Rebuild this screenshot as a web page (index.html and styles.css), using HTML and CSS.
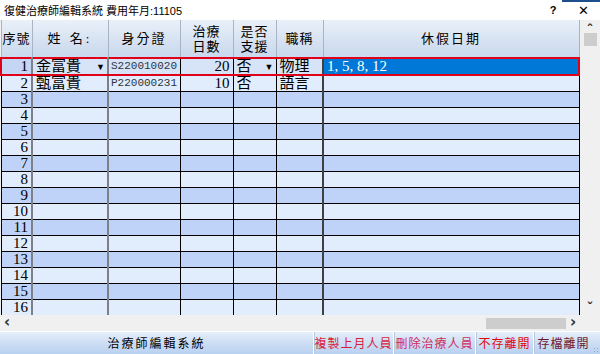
FILE: index.html
```html
<!DOCTYPE html>
<html lang="zh-Hant">
<head>
    <meta charset="UTF-8">
    <title>復健治療師編輯系統</title>
    <link rel="stylesheet" href="styles.css">
</head>
<body>

<div class="titlebar">
    <span class="title">復健治療師編輯系統 費用年月:11105</span>
    <span class="tb-btn help">?</span>
    <span class="tb-btn close">✕</span>
    <span class="taskbar-edge"></span>
</div>

<div class="grid-area">
    <table class="grid">
        <colgroup>
            <col style="width: 31px">
            <col style="width: 76px">
            <col style="width: 72px">
            <col style="width: 53px">
            <col style="width: 43px">
            <col style="width: 47px">
            <col>
        </colgroup>
        <thead>
            <tr>
                <th class="sep">序號</th>
                <th class="sep2 wide">姓&nbsp;名:</th>
                <th class="mid">身分證</th>
                <th>治療<br>日數</th>
                <th>是否<br>支援</th>
                <th>職稱</th>
                <th class="sep-left mid">休假日期</th>
            </tr>
        </thead>
        <tbody id="rows">
            <tr class="odd current">
                <td class="num sep">1</td>
                <td class="combo sep2">金富貴<span class="arrow">▼</span></td>
                <td class="id">S220010020</td>
                <td class="num">20</td>
                <td class="combo">否<span class="arrow">▼</span></td>
                <td>物理</td>
                <td class="selected sep-left">1, 5, 8, 12</td>
            </tr>
            <tr class="even">
                <td class="num sep">2</td>
                <td class="sep2">甄富貴</td>
                <td class="id">P220000231</td>
                <td class="num">10</td>
                <td>否</td>
                <td>語言</td>
                <td class="sep-left"></td>
            </tr>
        </tbody>
    </table>
    <div class="vscroll">
        <span class="sc-arrow">&#710;</span>
        <span class="vthumb"></span>
        <span class="vspace"></span>
        <span class="sc-arrow down">&#711;</span>
    </div>
</div>

<div class="hscroll-row">
    <div class="hscroll">
        <span class="sc-arrow">&lsaquo;</span>
        <span class="hspace"></span>
        <span class="hthumb"></span>
        <span class="sc-arrow">&rsaquo;</span>
    </div>
    <div class="corner"></div>
</div>

<div class="statusbar">
    <div class="caption">治療師編輯系統</div>
    <button class="act red">複製上月人員</button>
    <button class="act pink">刪除治療人員</button>
    <button class="act red2">不存離開</button>
    <button class="act dark">存檔離開</button>
    <span class="grip"></span>
</div>

<script>
    const body = document.getElementById('rows');
    for (let i = 3; i <= 16; i++) {
        const row = body.insertRow(body.rows.length);
        row.className = i % 2 ? 'odd' : 'even';
        for (let c = 0; c < 7; c++) {
            const cell = row.insertCell(c);
            if (c === 0) {
                cell.className = 'num sep';
                cell.innerHTML = i;
            }
            if (c === 1) cell.className = 'sep2';
            if (c === 6) cell.className = 'sep-left';
        }
    }
</script>

</body>
</html>
```

FILE: styles.css
```css
body {
    margin: 0;
    width: 600px;
    height: 354px;
    overflow: hidden;
    background-color: #f0f0f0;
    font-family: "Liberation Serif", "Noto Sans CJK TC", serif;
    display: flex;
    flex-direction: column;
}

.titlebar {
    position: relative;
    height: 20px;
    background-color: #ffffff;
    display: flex;
    align-items: center;
    font-family: "Liberation Sans", "Noto Sans CJK TC", sans-serif;
    font-size: 11px;
    color: #000;
    flex-shrink: 0;
}

.title {
    padding-left: 4px;
    flex: 1;
}

.tb-btn {
    width: 30px;
    text-align: center;
    font-size: 12px;
}

.help {
    font-weight: bold;
    font-size: 11px;
}

.close {
    font-size: 13px;
    margin-right: 2px;
}

.taskbar-edge {
    position: absolute;
    right: 0;
    top: 0;
    width: 38px;
    height: 2px;
    background-color: #1c4f8c;
}

.grid-area {
    display: flex;
    height: 295px;
    flex-shrink: 0;
    overflow: hidden;
}

.grid {
    width: 580px;
    table-layout: fixed;
    border-collapse: collapse;
    font-size: 15px;
}

.grid th {
    height: 37px;
    padding: 0;
    font-weight: normal;
    font-size: 13px;
    line-height: 15px;
    letter-spacing: 1px;
    white-space: nowrap;
    text-align: center;
    color: #000;
    background: linear-gradient(#e9f0f9, #d5e1f1 60%, #c9d8ed);
    border-left: 1px solid #a8b4c4;
    border-right: 1px solid #a8b4c4;
    border-bottom: 1px solid #8090a0;
}

.grid th.wide {
    letter-spacing: 3px;
}

.grid th.mid {
    letter-spacing: 2px;
}

.grid td {
    height: 15px;
    padding: 0 3px;
    line-height: 15px;
    border: 1px solid #000;
    white-space: nowrap;
    overflow: hidden;
    color: #000;
}

.grid td.sep {
    border-right: 2px solid #7c8088;
}

.grid td.sep2 {
    border-right: 2px solid #7c8088;
}

.grid td.sep-left {
    border-left: 2px solid #404040;
}

.odd td {
    background-color: #bfd3f8;
}

.even td {
    background-color: #e1edfd;
}

.num {
    text-align: right;
}

.combo {
    position: relative;
}

.arrow {
    position: absolute;
    right: 2px;
    top: 1px;
    font-size: 9px;
    color: #000;
}

.grid td.id {
    padding: 0 2px;
    color: #2c3440;
    font-family: "Liberation Mono", monospace;
    font-size: 11px;
    letter-spacing: 0;
}

.current td {
    background-color: #d7e4f8;
    border-top: 2px solid #e00018;
    border-bottom: 2px solid #e00018;
}

.current td:first-child {
    border-left: 2px solid #e00018;
    background-color: #c4d6f4;
}

.current td.selected {
    background-color: #0078d7;
    color: #ffffff;
    border-right: 2px solid #e00018;
}

.vscroll {
    width: 20px;
    display: flex;
    flex-direction: column;
    align-items: center;
    background-color: #f0f0f0;
}

.sc-arrow {
    height: 13px;
    font-family: "DejaVu Sans", sans-serif;
    font-size: 14px;
    line-height: 20px;
    font-weight: bold;
    color: #303030;
}

.sc-arrow.down {
    line-height: 12px;
}

.vthumb {
    width: 13px;
    height: 13px;
    background-color: #cdcdcd;
}

.vspace {
    flex: 1;
}

.hscroll-row {
    display: flex;
    height: 16px;
    flex-shrink: 0;
}

.hscroll {
    width: 580px;
    display: flex;
    align-items: center;
    background-color: #f0f0f0;
}

.hscroll .sc-arrow {
    width: 14px;
    height: 16px;
    text-align: center;
    line-height: 15px;
    font-size: 15px;
}

.hspace {
    flex: 1;
}

.hthumb {
    width: 80px;
    height: 11px;
    background-color: #cdcdcd;
}

.corner {
    flex: 1;
    background-color: #f0f0f0;
}

.statusbar {
    position: relative;
    flex: 1;
    min-height: 0;
    display: flex;
    align-items: stretch;
    background: linear-gradient(#e6effa, #cfdff4 45%, #b9d1f1);
    border-top: 1px solid #ffffff;
    font-family: "Noto Sans CJK TC", serif;
    font-size: 12px;
    overflow: hidden;
}

.caption {
    width: 313px;
    display: flex;
    align-items: center;
    justify-content: center;
    letter-spacing: 2px;
    line-height: 14px;
    color: #000;
}

.act {
    margin: 0;
    padding: 0;
    background: transparent;
    border: none;
    border-left: 1px solid #ffffff;
    box-shadow: inset 1px 0 0 #b8c8dc;
    font-family: inherit;
    font-size: 12px;
    line-height: 14px;
    letter-spacing: 1px;
    white-space: nowrap;
    text-align: center;
}

.red {
    width: 80px;
    color: #d81c3c;
}

.pink {
    width: 82px;
    color: #d02c5c;
}

.red2 {
    width: 58px;
    color: #e00808;
}

.dark {
    width: 60px;
    color: #6c1830;
}

.grip {
    position: absolute;
    right: 1px;
    bottom: 1px;
    width: 6px;
    height: 6px;
    background: radial-gradient(circle, #a0a8b4 1px, transparent 1px) 0 0 / 3px 3px;
}
```
